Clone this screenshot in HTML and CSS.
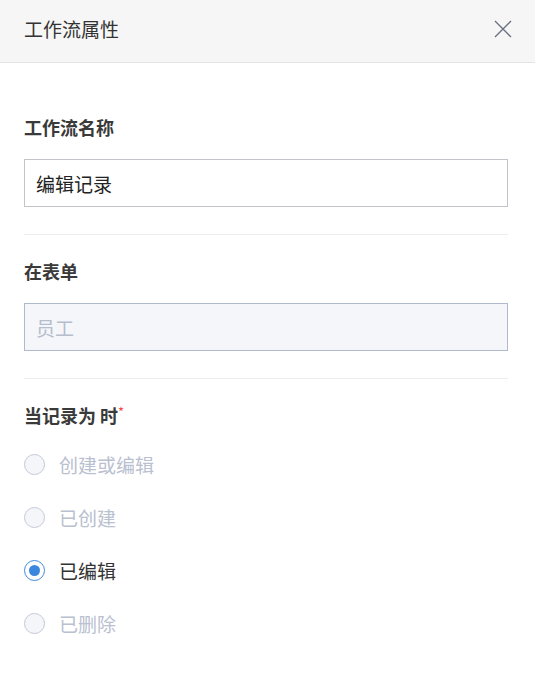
FILE: index.html
```html
<!DOCTYPE html>
<html lang="zh">
<head>
<meta charset="utf-8">
<title>工作流属性</title>
<link rel="stylesheet" href="styles.css">
</head>
<body>
<div class="panel">
  <header class="header">
    <h1 class="title">工作流属性</h1>
    <button class="close" aria-label="关闭">
      <svg width="18" height="18" viewBox="0 0 18 18"><path d="M1 1L17 17M17 1L1 17" stroke="#6b7080" stroke-width="1.3" fill="none"/></svg>
    </button>
  </header>
  <div class="form">
    <section class="section">
      <div class="label">工作流名称</div>
      <div class="input">编辑记录</div>
    </section>
    <section class="section">
      <div class="label">在表单</div>
      <div class="input disabled">员工</div>
    </section>
    <section class="section last">
      <div class="label">当记录为 时<span class="req">*</span></div>
      <div class="radios">
        <div class="radio disabled"><span class="circle"></span><span class="rtext">创建或编辑</span></div>
        <div class="radio disabled"><span class="circle"></span><span class="rtext">已创建</span></div>
        <div class="radio checked"><span class="circle"></span><span class="rtext">已编辑</span></div>
        <div class="radio disabled"><span class="circle"></span><span class="rtext">已删除</span></div>
      </div>
    </section>
  </div>
</div>
</body>
</html>
```
FILE: styles.css
```css
* { box-sizing: border-box; }
html, body { margin: 0; padding: 0; background: #fff; }
body {
  font-family: "Noto Sans CJK SC", "Noto Sans", "Liberation Sans", sans-serif;
  color: #333;
  width: 535px;
}
.header {
  height: 63px;
  background: #f6f6f6;
  border-bottom: 1px solid #e4e4e4;
  display: flex;
  align-items: center;
  justify-content: space-between;
  padding: 0 23px 4px 24px;
}
.title {
  margin: 0;
  font-size: 19px;
  font-weight: 400;
  color: #333;
  line-height: 26px;
}
.close {
  border: 0;
  background: none;
  padding: 0;
  width: 18px;
  height: 18px;
  display: flex;
}
.form {
  padding: 28px 27px 0 24px;
}
.section {
  padding: 24px 0 27px;
  border-bottom: 1px solid #ededed;
}
.section.last { border-bottom: 0; }
.label {
  font-size: 18px;
  font-weight: 700;
  line-height: 24px;
  color: #3a3a3a;
  margin-bottom: 20px;
}
.req {
  color: #f5484a;
  font-size: 13px;
  font-weight: 400;
  vertical-align: top;
  line-height: 18px;
}
.input {
  height: 48px;
  border: 1px solid #c3c4c9;
  padding: 0 11px;
  display: flex;
  align-items: center;
  font-size: 19px;
  color: #222;
}
.input.disabled {
  background: #f5f6fa;
  border-color: #b1bacc;
  color: #b6bdcc;
}
.section.last .label { margin-bottom: 11px; }
.radios { display: flex; flex-direction: column; }
.radio {
  height: 53px;
  display: flex;
  align-items: center;
  gap: 14px;
  font-size: 19px;
}
.circle {
  width: 21px;
  height: 21px;
  border-radius: 50%;
  border: 1px solid #c3c9d8;
  background: #f5f6fa;
  display: flex;
  align-items: center;
  justify-content: center;
  flex: none;
}
.radio.disabled .rtext { color: #b9c0cf; }
.radio.checked .circle {
  border-color: #3d8ae0;
  background: #fff;
}
.radio.checked .circle::after {
  content: "";
  width: 11px;
  height: 11px;
  border-radius: 50%;
  background: #3a87dd;
}
.radio.checked .rtext { color: #333; }
```
